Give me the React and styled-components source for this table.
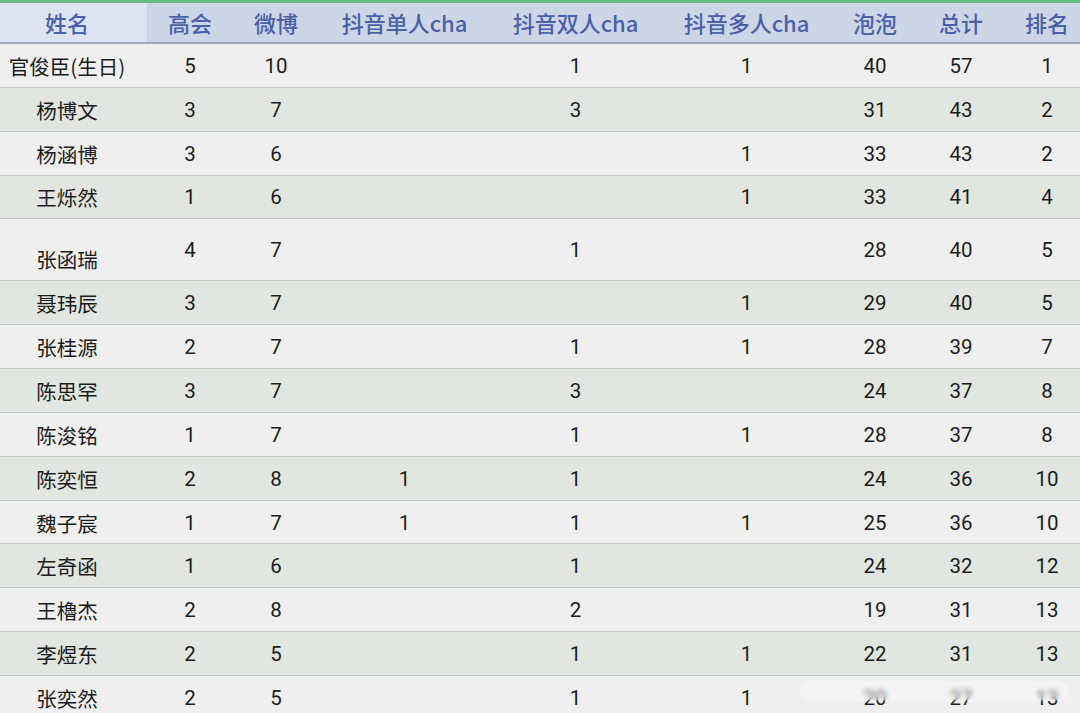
import React from "react";
import styled, { createGlobalStyle } from "styled-components";

const Global = createGlobalStyle`
  html, body { margin: 0; padding: 0; background: #efefef; }
  body { font-family: Roboto, "Noto Sans CJK SC", sans-serif; }
`;

const COLS = "160px 86px 86px 171px 171px 171px 86px 86px 86px";

const Viewport = styled.div`
  position: relative;
  width: 1080px;
  height: 713px;
  overflow: hidden;
  background: #efefef;
`;

const Table = styled.div`
  width: 1093px;
  margin-left: -13px;
  border-top: 3px solid #68bd84;
`;

const HeaderRow = styled.div`
  display: grid;
  grid-template-columns: ${COLS};
  height: 39px;
  border-bottom: 2px solid #9ea6bc;
  background: #cdd6e6;
`;

const HeadCell = styled.div`
  display: flex;
  align-items: center;
  justify-content: center;
  font-family: "Noto Sans CJK SC", Roboto, sans-serif;
  font-size: 22px;
  font-weight: 500;
  color: #4a60a8;
  background: ${(p) => (p.$first ? "#dee3f2" : "transparent")};
  padding-bottom: 1px;
`;

const Row = styled.div`
  display: grid;
  grid-template-columns: ${COLS};
  height: ${(p) => (p.$tall ? "61px" : "42.85px")};
  background: ${(p) => (p.$alt ? "#e1e6e0" : "#efefef")};
  border-bottom: 1px solid #c3c7ce;
`;

const Cell = styled.div`
  display: flex;
  align-items: ${(p) => (p.$low ? "flex-end" : "center")};
  justify-content: center;
  padding-top: ${(p) => (p.$low ? "0" : "1px")};
  padding-bottom: ${(p) => (p.$low ? "6px" : "0")};
  font-family: ${(p) =>
    p.$name ? `"Noto Sans CJK SC", sans-serif` : `Roboto, "Noto Sans CJK SC", sans-serif`};
  font-size: 20.5px;
  color: #1c1c1c;
`;

const Watermark = styled.div`
  position: absolute;
  left: 800px;
  top: 682px;
  width: 268px;
  height: 18px;
  border-radius: 9px;
  backdrop-filter: blur(2.5px);
  background: rgba(255, 255, 255, 0.35);
  box-shadow: 0 0 4px rgba(255, 255, 255, 0.6);
`;

const headers = ["姓名", "高会", "微博", "抖音单人cha", "抖音双人cha", "抖音多人cha", "泡泡", "总计", "排名"];

const rows = [
  ["官俊臣(生日)", 5, 10, "", 1, 1, 40, 57, 1],
  ["杨博文", 3, 7, "", 3, "", 31, 43, 2],
  ["杨涵博", 3, 6, "", "", 1, 33, 43, 2],
  ["王烁然", 1, 6, "", "", 1, 33, 41, 4],
  ["张函瑞", 4, 7, "", 1, "", 28, 40, 5],
  ["聂玮辰", 3, 7, "", "", 1, 29, 40, 5],
  ["张桂源", 2, 7, "", 1, 1, 28, 39, 7],
  ["陈思罕", 3, 7, "", 3, "", 24, 37, 8],
  ["陈浚铭", 1, 7, "", 1, 1, 28, 37, 8],
  ["陈奕恒", 2, 8, 1, 1, "", 24, 36, 10],
  ["魏子宸", 1, 7, 1, 1, 1, 25, 36, 10],
  ["左奇函", 1, 6, "", 1, "", 24, 32, 12],
  ["王櫓杰", 2, 8, "", 2, "", 19, 31, 13],
  ["李煜东", 2, 5, "", 1, 1, 22, 31, 13],
  ["张奕然", 2, 5, "", 1, 1, 20, 27, 13],
];

export default function App() {
  return (
    <>
      <Global />
      <Viewport>
        <Table>
          <HeaderRow>
            {headers.map((h, i) => (
              <HeadCell key={h} $first={i === 0}>
                {h}
              </HeadCell>
            ))}
          </HeaderRow>
          {rows.map((r, ri) => {
            const tall = r[0] === "张函瑞";
            return (
              <Row key={r[0]} $alt={ri % 2 === 1} $tall={tall}>
                {r.map((v, ci) => (
                  <Cell key={ci} $name={ci === 0} $low={tall && ci === 0}>
                    {v}
                  </Cell>
                ))}
              </Row>
            );
          })}
        </Table>
        <Watermark />
      </Viewport>
    </>
  );
}
